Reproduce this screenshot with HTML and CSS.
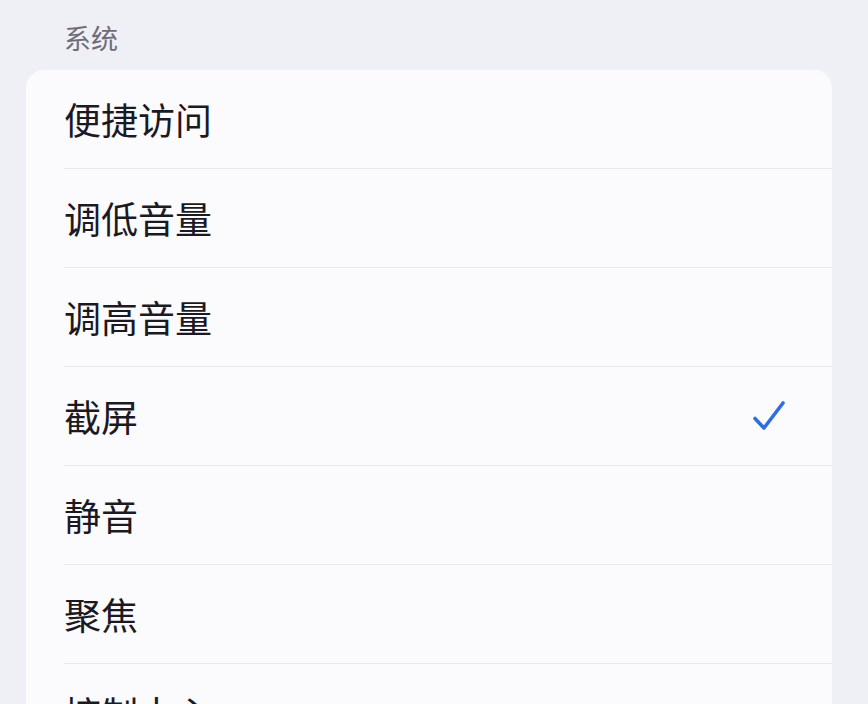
FILE: index.html
```html
<!DOCTYPE html>
<html lang="zh-CN">
<head>
    <meta charset="UTF-8">
    <meta name="viewport" content="width=device-width, initial-scale=1.0">
    <title>系统</title>
    <link rel="stylesheet" href="styles.css">
</head>
<body>
    <div class="section-title">系统</div>

    <div class="list">
        <div class="list-item"><div class="item-inner"><span class="item-label">便捷访问</span></div></div>
        <div class="list-item"><div class="item-inner"><span class="item-label">调低音量</span></div></div>
        <div class="list-item"><div class="item-inner"><span class="item-label">调高音量</span></div></div>
        <div class="list-item">
            <div class="item-inner">
                <span class="item-label">截屏</span>
                <svg class="check" width="34" height="32" viewBox="0 0 34 32">
                    <path d="M3 18.5 L12 28 L31 3" fill="none" stroke="#2f6fdc" stroke-width="3.6" stroke-linecap="round" stroke-linejoin="round"/>
                </svg>
            </div>
        </div>
        <div class="list-item"><div class="item-inner"><span class="item-label">静音</span></div></div>
        <div class="list-item"><div class="item-inner"><span class="item-label">聚焦</span></div></div>
        <div class="list-item"><div class="item-inner"><span class="item-label">控制中心</span></div></div>
    </div>
</body>
</html>
```

FILE: styles.css
```css
body {
    margin: 0;
    padding: 0;
    background-color: #eff0f5;
    font-family: "Noto Sans CJK SC", "Noto Sans", sans-serif;
    color: #1b1922;
    overflow: hidden;
    height: 704px;
}
.section-title {
    padding: 20px 0 0 64px;
    height: 50px;
    font-size: 27px;
    line-height: 36px;
    color: #6f6c78;
    box-sizing: border-box;
}
.list {
    margin: 20px 36px 0 26px;
    background-color: #fbfbfe;
    border-radius: 18px;
}
.list-item {
    padding-left: 38px;
}
.item-inner {
    display: flex;
    align-items: center;
    justify-content: space-between;
    height: 98px;
    padding-right: 46px;
    border-bottom: 1px solid #e7e8ee;
}
.item-label {
    font-size: 37px;
    line-height: 1;
}
.check {
    display: block;
}
```
